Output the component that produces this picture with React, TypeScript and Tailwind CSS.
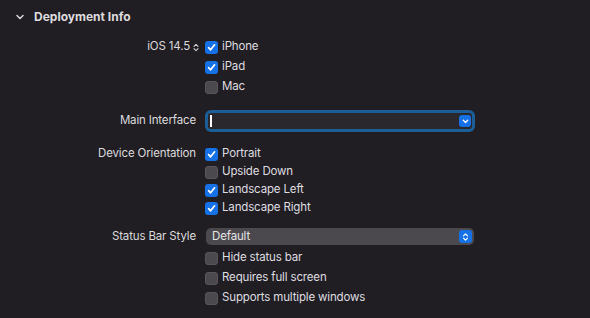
import type { ReactNode } from 'react';

const font = { fontFamily: "Inter, 'Liberation Sans', sans-serif" };

function Check({ on, label }: { on?: boolean; label: string }) {
  return (
    <div className="flex items-center gap-[4px]">
      <div
        className={`w-[13px] h-[13px] rounded-[3px] flex items-center justify-center ${
          on ? 'bg-[#1670e6]' : 'bg-[#4b494d] border border-[#58565a]'
        }`}
      >
        {on && (
          <svg width="9" height="9" viewBox="0 0 9 9">
            <path d="M1.6 4.7 L3.6 6.8 L7.6 1.8" fill="none" stroke="#fff" strokeWidth="1.7" strokeLinecap="round" strokeLinejoin="round" />
          </svg>
        )}
      </div>
      <span className="text-[11.5px] tracking-[-0.15px] text-[#dfdde0]">{label}</span>
    </div>
  );
}

function Row({ label, h, children, className = '' }: { label?: ReactNode; h: string; children: ReactNode; className?: string }) {
  return (
    <div className={`flex items-center ${h} ${className}`}>
      <div className="w-[196px] text-right text-[11.5px] tracking-[-0.15px] text-[#dcdadd] shrink-0">{label}</div>
      <div className="ml-[9px] flex-1 flex items-center">{children}</div>
    </div>
  );
}

export default function App() {
  return (
    <div className="w-[590px] h-[318px] bg-[#201e22] overflow-hidden" style={font}>
      {/* Header */}
      <div className="h-[34px] flex items-center pl-[16px] gap-[10px]">
        <svg width="8" height="6" viewBox="0 0 8 6">
          <path d="M1 1.5 L4 4.5 L7 1.5" fill="none" stroke="#d8d6da" strokeWidth="1.5" strokeLinecap="round" strokeLinejoin="round" />
        </svg>
        <span className="text-[12px] font-bold text-[#dedcdf]">Deployment Info</span>
      </div>

      <div className="mt-[3px]">
        <Row
          h="h-[20px]"
          label={
            <span className="inline-flex items-center gap-[3px] translate-x-[3px]">
              iOS 14.5
              <svg width="6" height="9" viewBox="0 0 6 9">
                <path d="M1 3.3 L3 1.3 L5 3.3 M1 5.7 L3 7.7 L5 5.7" fill="none" stroke="#cfcdd1" strokeWidth="1.1" strokeLinecap="round" strokeLinejoin="round" />
              </svg>
            </span>
          }
        >
          <Check on label="iPhone" />
        </Row>
        <Row h="h-[20px]">
          <Check on label="iPad" />
        </Row>
        <Row h="h-[20px]">
          <Check label="Mac" />
        </Row>
      </div>

      {/* Main Interface */}
      <Row h="h-[22px]" className="mt-[13px]" label="Main Interface">
        <div className="w-[270px] h-[22px] rounded-[6px] bg-[#1b5e98] p-[3px]">
          <div className="h-full rounded-[3px] bg-[#2a282c] flex items-center justify-between pl-[2px] pr-[1px]">
            <div className="w-[1.5px] h-[12px] bg-white" />
            <div className="w-[12px] h-[12px] rounded-[3px] bg-[#1670e6] flex items-center justify-center">
              <svg width="7" height="5" viewBox="0 0 7 5">
                <path d="M1.3 1.3 L3.5 3.5 L5.7 1.3" fill="none" stroke="#fff" strokeWidth="1.3" strokeLinecap="round" strokeLinejoin="round" />
              </svg>
            </div>
          </div>
        </div>
      </Row>

      {/* Device Orientation */}
      <div className="mt-[13px]">
        <Row h="h-[18px]" label="Device Orientation">
          <Check on label="Portrait" />
        </Row>
        <Row h="h-[18px]">
          <Check label="Upside Down" />
        </Row>
        <Row h="h-[18px]">
          <Check on label="Landscape Left" />
        </Row>
        <Row h="h-[18px]">
          <Check on label="Landscape Right" />
        </Row>
      </div>

      {/* Status Bar Style */}
      <Row h="h-[17px]" className="mt-[11px]" label="Status Bar Style">
        <div className="w-[268px] h-[17px] rounded-[5px] bg-[#4b494e] flex items-center justify-between pl-[6px] pr-[2px] ml-[1px]">
          <span className="text-[11.5px] tracking-[-0.15px] text-[#e6e4e7]">Default</span>
          <div className="w-[13px] h-[13px] rounded-[3px] bg-[#1670e6] flex items-center justify-center">
            <svg width="7" height="10" viewBox="0 0 7 10">
              <path d="M1.5 3.8 L3.5 1.8 L5.5 3.8 M1.5 6.2 L3.5 8.2 L5.5 6.2" fill="none" stroke="#fff" strokeWidth="1.2" strokeLinecap="round" strokeLinejoin="round" />
            </svg>
          </div>
        </div>
      </Row>

      <div className="mt-[3px]">
        <Row h="h-[20px]">
          <Check label="Hide status bar" />
        </Row>
        <Row h="h-[20px]">
          <Check label="Requires full screen" />
        </Row>
        <Row h="h-[20px]">
          <Check label="Supports multiple windows" />
        </Row>
      </div>
    </div>
  );
}
